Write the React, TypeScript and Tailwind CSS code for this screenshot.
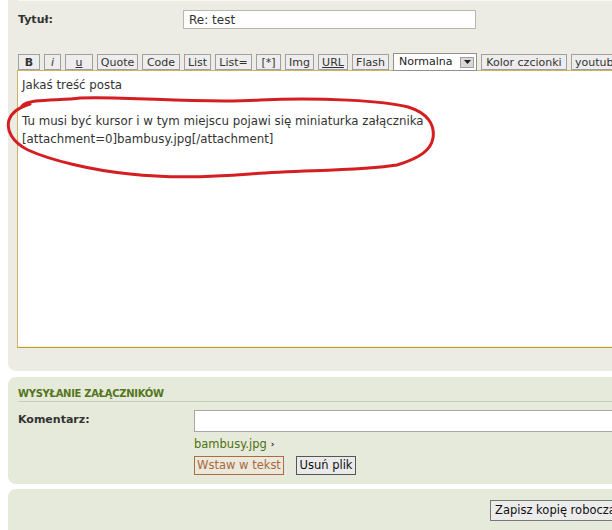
import React from "react";

const Btn = ({ w, children, className = "" }: { w: string; children: React.ReactNode; className?: string }) => (
  <div
    className={`${w} h-[16px] shrink-0 flex items-center justify-center border border-[#a0a0a0] bg-[#ededed] text-[#333] text-[11px] leading-none ${className}`}
  >
    {children}
  </div>
);

export default function App() {
  return (
    <div className="relative w-[612px] h-[530px] overflow-hidden bg-white font-['DejaVu_Sans',Verdana,sans-serif] text-[11px] text-[#333]">
      {/* Panel 1 */}
      <div className="ml-[8px] w-[640px] h-[371px] bg-[#ecebe4] rounded-bl-[8px] pl-[9px] relative">
        <div className="ml-[1px] h-px bg-[#f7f7f3]" />
        <div className="flex items-start pt-[9px] h-[52px]">
          <div className="w-[166px] pl-[1px] pt-[2px] font-bold text-[#333] text-[11px]">Tytuł:</div>
          <div className="w-[293px] h-[19px] bg-white border border-[#b8b8b0] flex items-center pl-[5px] text-[12px] text-[#333]">
            Re: test
          </div>
        </div>
        <div className="flex items-center gap-[4px] pl-[1px] h-[18px]">
          <Btn w="w-[22px]" className="font-bold">B</Btn>
          <Btn w="w-[17px]" className="italic">i</Btn>
          <Btn w="w-[28px]" className="underline">u</Btn>
          <Btn w="w-[41px]">Quote</Btn>
          <Btn w="w-[38px]">Code</Btn>
          <Btn w="w-[27px]">List</Btn>
          <Btn w="w-[37px]">List=</Btn>
          <Btn w="w-[25px]">[*]</Btn>
          <Btn w="w-[29px]">Img</Btn>
          <Btn w="w-[30px]" className="underline">URL</Btn>
          <Btn w="w-[37px]">Flash</Btn>
          <div className="w-[84px] h-[18px] shrink-0 bg-white border border-[#909090] flex items-center justify-between pl-[5px] pr-[2px] text-[11px] text-[#222]">
            <span>Normalna</span>
            <span className="w-[14px] h-[11px] bg-[#d8d8d8] border border-[#a0a0a0] flex items-center justify-center">
              <svg width="7" height="4" viewBox="0 0 7 4"><path d="M0 0h7L3.5 4z" fill="#222" /></svg>
            </span>
          </div>
          <Btn w="w-[86px]">Kolor czcionki</Btn>
          <Btn w="w-[60px]" className="justify-start pl-[3px]">youtube</Btn>
        </div>
        <div className="mt-[-1px] h-[278px] bg-white border border-[#cfb260] border-b-[#b89a52] shadow-[inset_0_-1px_0_#fff6b0] pl-[4px] pt-[5px] text-[11.8px] leading-[18px] text-[#333] whitespace-pre-line">
          {"Jakaś treść posta\n\nTu musi być kursor i w tym miejscu pojawi się miniaturka załącznika\n[attachment=0]bambusy.jpg[/attachment]"}
        </div>
      </div>

      {/* Panel 2 */}
      <div className="mt-[6px] ml-[8px] w-[640px] h-[107px] bg-[#e6eada] rounded-[8px] pl-[10px]">
        <div className="pt-[9px] h-[25px] border-b border-[#c9cdbd] text-[10px] font-bold text-[#55751d] tracking-[-0.3px]">
          WYSYŁANIE ZAŁĄCZNIKÓW
        </div>
        <div className="flex mt-[8px]">
          <div className="w-[176px] pt-[2px] font-bold text-[#333]">Komentarz:</div>
          <div className="w-[450px] h-[22px] bg-white border border-[#a8a8a8]" />
        </div>
        <div className="ml-[176px] mt-[5px] text-[#4e6f12] flex items-center gap-[4px] h-[16px] text-[11.5px]">
          bambusy.jpg <span className="text-[9px] font-bold text-[#333]">›</span>
        </div>
        <div className="ml-[176px] mt-[3px] flex gap-[12px]">
          <div className="w-[90px] h-[19px] border border-[#b06a3f] bg-[#ebe8dc] text-[#a8683e] flex items-center justify-center text-[11.5px]">
            Wstaw w tekst
          </div>
          <div className="w-[60px] h-[19px] border border-[#555] bg-[#eaeaea] text-[#111] flex items-center justify-center text-[11.5px]">
            Usuń plik
          </div>
        </div>
      </div>

      {/* Panel 3 */}
      <div className="mt-[5px] ml-[8px] w-[640px] h-[60px] bg-[#e6eada] rounded-[8px] pt-[11px] pl-[482px]">
        <div className="w-[140px] h-[21px] border border-[#777] bg-[#ececec] text-[#111] flex items-center pl-[4px] text-[11.5px]">
          Zapisz kopię roboczą
        </div>
      </div>

      {/* Red hand-drawn ellipse */}
      <svg className="absolute left-0 top-0 pointer-events-none" width="612" height="530">
        <path
          d="M22 106 C 30 98, 60 101, 80 98 C 130 96, 200 104, 260 100 C 320 97, 385 101, 408 107 C 428 113, 435 125, 433 138 C 431 150, 420 158, 397 165 C 360 171, 300 170, 250 174 C 200 178, 165 178, 130 174 C 90 170, 50 160, 28 150 C 12 142, 6 130, 9 120 C 12 112, 18 108, 30 104"
          fill="none"
          stroke="#d41e22"
          strokeWidth="3"
          strokeLinecap="round"
        />
      </svg>
    </div>
  );
}
